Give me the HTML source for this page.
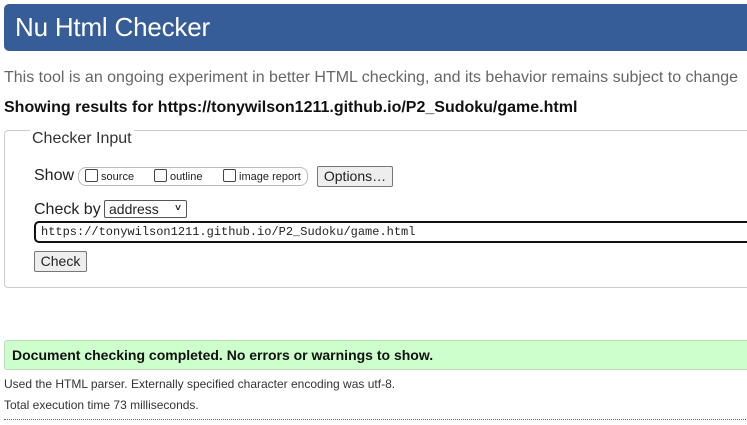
<!DOCTYPE html>
<html><head><meta charset="utf-8"><style>
body{margin:0;width:747px;height:425px;overflow:hidden;background:#fff;font-family:"Liberation Sans",Arial,sans-serif;color:#222;position:relative}
.a{position:absolute;white-space:nowrap}
#hd{left:4px;top:4px;width:760px;height:47px;background:#365d97;border-radius:5px}
#hd span{position:absolute;left:11px;top:8px;font-size:26px;color:#fff;letter-spacing:-0.2px}
fieldset{position:absolute;left:4px;top:130px;width:760px;height:158px;border:1px solid #ccc;border-radius:4px;margin:0;padding:0;box-sizing:border-box}
.box{border:1px solid #bbb;border-radius:8px}
.cb{display:inline-block;width:11px;height:11px;border:1px solid #444;border-radius:2px;vertical-align:-2px;background:#fff}
.btn{background:#eee;border:1px solid #777;border-radius:2px;font-size:14px;box-sizing:border-box;text-align:center}
</style></head><body>
<div class="a" id="hd"><span>Nu Html Checker</span></div>
<div class="a" style="left:4px;top:69px;font-size:16px;color:#666">This tool is an ongoing experiment in better HTML checking, and its behavior remains subject to change</div>
<div class="a" style="left:4px;top:99px;font-size:16px;font-weight:bold;color:#111">Showing results for https://tonywilson1211.github.io/P2_Sudoku/game.html</div>
<fieldset></fieldset>
<div class="a" style="left:30px;top:122px;background:#fff;padding:0 2px;font-size:16px;color:#333;line-height:34px">Checker Input</div>
<div class="a" style="left:34px;top:167px;font-size:16px">Show</div>
<div class="a box" style="left:78px;top:167px;width:228px;height:17px"></div>
<div class="a" style="left:85px;top:169px;font-size:11px"><span class="cb"></span> source</div>
<div class="a" style="left:154px;top:169px;font-size:11px"><span class="cb"></span> outline</div>
<div class="a" style="left:223px;top:169px;font-size:11px"><span class="cb"></span> image report</div>
<div class="a btn" style="left:317px;top:166px;width:76px;height:21px;line-height:19px">Options…</div>
<div class="a" style="left:34px;top:201px;font-size:16px">Check by</div>
<div class="a" style="left:104px;top:200px;width:83px;height:18px;border:1px solid #555;border-radius:2px;font-size:14px;line-height:16px;box-sizing:border-box;padding-left:4px">address<span style="position:absolute;right:5px;top:0;font-size:10px;font-weight:bold">&#x2C5;</span></div>
<div class="a" style="left:34px;top:221px;width:730px;height:22px;border:2px solid #111;border-radius:5px;box-sizing:border-box;font-family:'Liberation Mono',monospace;font-size:12px;line-height:18px;padding-left:5px">https://tonywilson1211.github.io/P2_Sudoku/game.html</div>
<div class="a btn" style="left:34px;top:251px;width:53px;height:21px;line-height:19px">Check</div>
<div class="a" style="left:4px;top:340px;width:760px;height:30px;background:#ccffcc;border:1px solid #bdb;border-radius:3px;box-sizing:border-box"></div>
<div class="a" style="left:12px;top:347px;font-size:14px;font-weight:bold;color:#111">Document checking completed. No errors or warnings to show.</div>
<div class="a" style="left:4px;top:377px;font-size:12px;color:#333">Used the HTML parser. Externally specified character encoding was utf-8.</div>
<div class="a" style="left:4px;top:398px;font-size:12px;color:#333">Total execution time 73 milliseconds.</div>
<div class="a" style="left:4px;top:419px;width:760px;border-top:1px dotted #666"></div>
</body></html>
